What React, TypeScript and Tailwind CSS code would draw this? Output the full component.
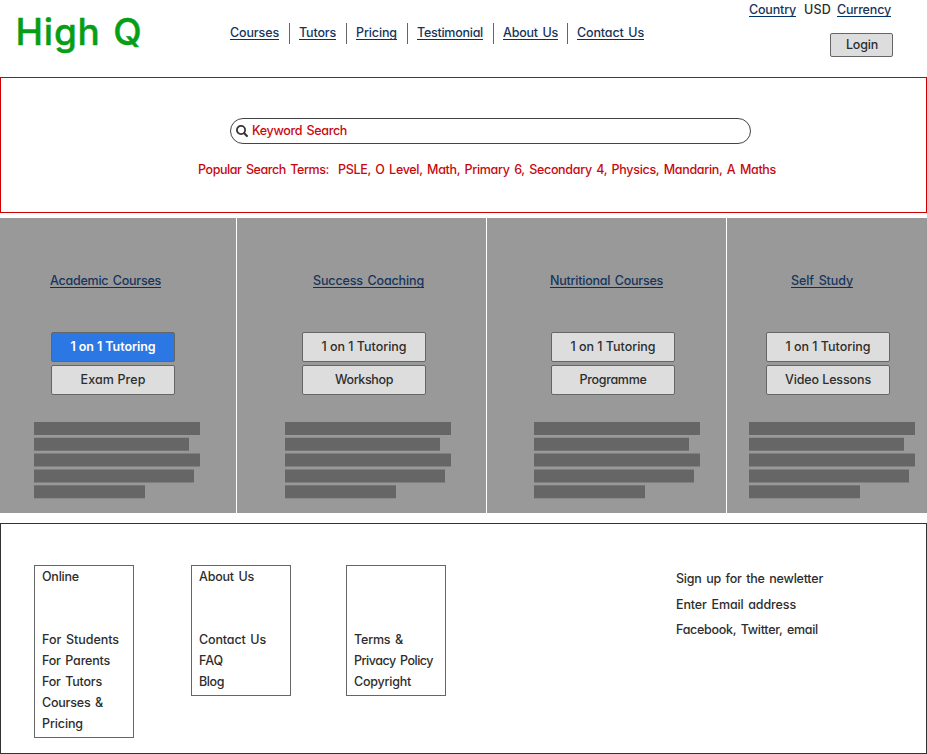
import { useLayoutEffect, useRef } from "react";

/** A single line of text whose tracking is tuned so it spans exactly `w` pixels. */
function Fit({ w, children, className = "" }: { w: number; children: string; className?: string }) {
  const ref = useRef<HTMLSpanElement>(null);
  useLayoutEffect(() => {
    const el = ref.current;
    if (!el) return;
    el.style.letterSpacing = "0px";
    const natural = el.getBoundingClientRect().width;
    el.style.letterSpacing = `${(w - natural) / children.length}px`;
  }, [w, children]);
  return (
    <span className={`block h-4 shrink-0 leading-[18px] whitespace-pre ${className}`} style={{ width: w }}>
      <span ref={ref} className="inline-block">
        {children}
      </span>
    </span>
  );
}

function Link({ w, children }: { w: number; children: string }) {
  return (
    <a className="block h-4 shrink-0 border-b border-[#003366] text-[#17355c]">
      <Fit w={w}>{children}</Fit>
    </a>
  );
}

function SearchIcon() {
  return (
    <svg viewBox="0 0 12 12" className="mt-[3px] mr-[4px] h-3 w-3" fill="none" stroke="#333" strokeLinecap="round">
      <circle cx="5" cy="5" r="4.1" strokeWidth="1.8" />
      <path d="M8.2 8.2 10.9 10.9" strokeWidth="2.1" />
    </svg>
  );
}

const nav: [string, number, string][] = [
  ["Courses", 49, "w-[59px]"],
  ["Tutors", 37, "w-[47px]"],
  ["Pricing", 41, "w-[51px]"],
  ["Testimonial", 66, "w-[76px]"],
  ["About Us", 55, "w-[64px]"],
  ["Contact Us", 67, "w-[68px]"],
];

const columns = [
  { box: "w-[236px]", title: "Academic Courses", tw: 111, tx: "pl-[50px]", bx: "pl-[51px]", lx: "pl-[34px]", second: "Exam Prep", sw: 65, active: true },
  { box: "w-[249px]", title: "Success Coaching", tw: 111, tx: "pl-[76px]", bx: "pl-[65px]", lx: "pl-[48px]", second: "Workshop", sw: 58, active: false },
  { box: "w-[239px]", title: "Nutritional Courses", tw: 113, tx: "pl-[63px]", bx: "pl-[64px]", lx: "pl-[47px]", second: "Programme", sw: 67, active: false },
  { box: "w-[200px]", title: "Self Study", tw: 62, tx: "pl-[64px]", bx: "pl-[39px]", lx: "pl-[22px]", second: "Video Lessons", sw: 86, active: false },
];

const bars = [
  "w-[166px] h-[13px] mb-[2px]",
  "w-[155px] h-[14px] mb-[2px] border-y border-t-[#8c8c8c] border-b-[#737373]",
  "w-[166px] h-[14px] mb-[2px] border-y border-t-[#7f7f7f] border-b-[#7f7f7f]",
  "w-[160px] h-[14px] mb-[2px] border-y border-t-[#808080] border-b-[#808080]",
  "w-[111px] h-[14px] border-y border-t-[#757575] border-b-[#8b8b8b]",
];

function Button({ label, w, active = false }: { label: string; w: number; active?: boolean }) {
  return (
    <button
      className={`flex h-[30px] w-[124px] justify-center rounded-[2px] border border-[#666] pt-[5px] ${
        active ? "bg-[#2b78e4] font-semibold text-white" : "bg-[#ddd]"
      }`}
    >
      <Fit w={w} className="text-left">{label}</Fit>
    </button>
  );
}

function FooterBox({ head, items, className }: { head?: [string, number]; items: [string, number][]; className: string }) {
  return (
    <div className={`w-[100px] border border-[#666] pt-[2px] pl-[7px] ${className}`}>
      <div className="h-[63px]">{head && <Fit w={head[1]}>{head[0]}</Fit>}</div>
      {items.map(([t, w]) => (
        <div key={t} className="h-[21px]">
          <Fit w={w}>{t}</Fit>
        </div>
      ))}
    </div>
  );
}

export default function App() {
  return (
    <div className="h-[754px] w-[927px] overflow-hidden bg-white font-['Inter','Open_Sans',sans-serif] text-[12.5px] font-medium text-[#2d2d2d] [font-feature-settings:'cv11'] [word-spacing:1.5px]">
      <header className="flex h-[77px]">
        <h1 className="w-[230px] pt-[11px] pl-[15.5px] text-[37px] leading-10 font-medium text-[#069e16] [word-spacing:2px] [-webkit-text-stroke:0.4px_#069e16]">
          <Fit w={127} className="!h-10 !leading-[41px]">High Q</Fit>
        </h1>
        <nav className="flex w-[519px] pt-[23px]">
          {nav.map(([t, w, box], i) => (
            <div key={t} className="flex">
              <div className={`${box} pt-px`}>
                <div className="flex">
                  <Link w={w}>{t}</Link>
                </div>
              </div>
              {i < nav.length - 1 && <div className="mr-[9px] h-[21px] w-px bg-[#666]" />}
            </div>
          ))}
        </nav>
        <div className="w-[178px] pt-px">
          <div className="flex">
            <Link w={47}>Country</Link>
            <Fit w={27} className="mr-[6px] ml-[8px]">USD</Fit>
            <Link w={54}>Currency</Link>
          </div>
          <button className="mt-4 ml-[81px] flex h-6 w-[63px] rounded-[2px] border border-[#666] bg-[#ddd] pt-[2px] pl-[15px] text-left">
            <Fit w={32}>Login</Fit>
          </button>
        </div>
      </header>

      <section className="h-[136px] border border-[#c00] pt-10 text-[#c8080e]">
        <div className="ml-[229px] flex h-[26px] w-[521px] rounded-full border border-[#444] pt-[3px] pl-[5px]">
          <SearchIcon />
          <Fit w={95}>Keyword Search</Fit>
        </div>
        <div className="mt-[17px] ml-[197px] flex">
          <Fit w={131}>Popular Search Terms:</Fit>
          <Fit w={438} className="ml-[9px]">PSLE, O Level, Math, Primary 6, Secondary 4, Physics, Mandarin, A Maths</Fit>
        </div>
      </section>

      <section className="mt-[5px] flex h-[295px] gap-px bg-white">
        {columns.map((c) => (
          <div key={c.title} className={`${c.box} bg-[#999] pt-[54px]`}>
            <div className={`flex ${c.tx}`}>
              <Link w={c.tw}>{c.title}</Link>
            </div>
            <div className={`mt-[44px] flex flex-col gap-[3px] ${c.bx}`}>
              <Button label="1 on 1 Tutoring" w={85} active={c.active} />
              <Button label={c.second} w={c.sw} />
            </div>
            <div className={`mt-[27px] ${c.lx}`}>
              {bars.map((b, i) => (
                <div key={i} className={`bg-[#666] ${b}`} />
              ))}
            </div>
          </div>
        ))}
      </section>

      <footer className="mt-[10px] flex h-[231px] items-start border border-[#333] pt-[41px] pl-[33px]">
        <FooterBox
          className="h-[173px]"
          head={["Online", 37]}
          items={[["For Students", 77], ["For Parents", 68], ["For Tutors", 60], ["Courses &", 61], ["Pricing", 41]]}
        />
        <FooterBox
          className="ml-[57px] h-[131px]"
          head={["About Us", 55]}
          items={[["Contact Us", 67], ["FAQ", 24], ["Blog", 25]]}
        />
        <FooterBox className="ml-[55px] h-[131px]" items={[["Terms &", 49], ["Privacy Policy", 79], ["Copyright", 57]]} />
        <div className="ml-[230px] pt-[5px]">
          <Fit w={147}>Sign up for the newletter</Fit>
          <Fit w={120} className="mt-[10px]">Enter Email address</Fit>
          <Fit w={142} className="mt-[9px]">Facebook, Twitter, email</Fit>
        </div>
      </footer>
    </div>
  );
}
